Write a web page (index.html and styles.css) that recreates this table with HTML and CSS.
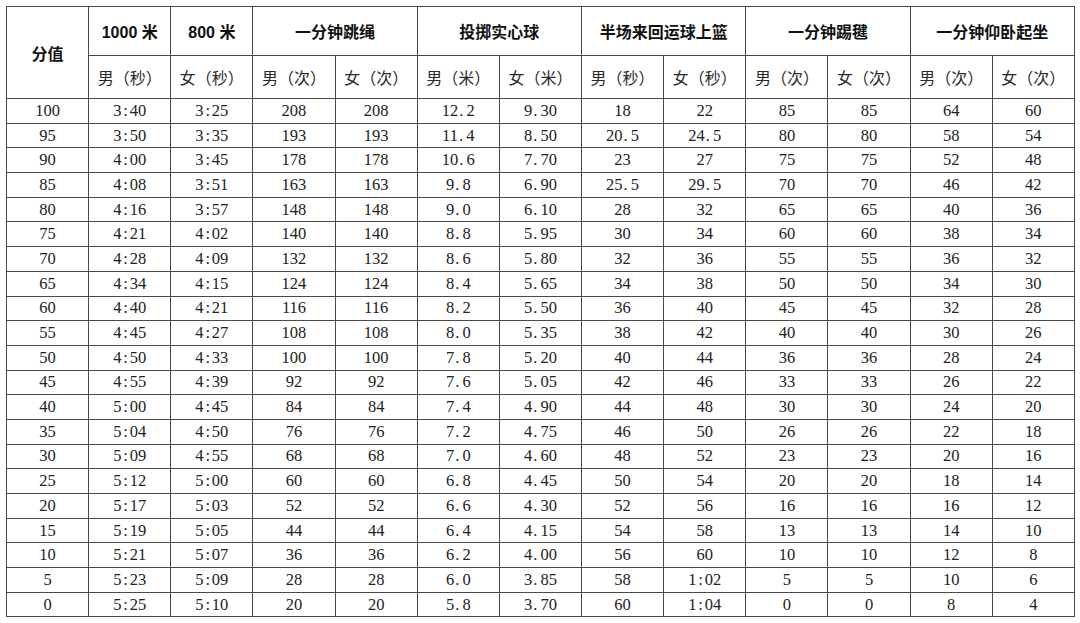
FILE: index.html
```html
<!DOCTYPE html>
<html lang="zh-CN">
<head>
<meta charset="utf-8">
<title>体育评分标准</title>
<link rel="stylesheet" href="styles.css">
</head>
<body>
<table class="score">
<colgroup>
<col><col><col><col><col><col><col><col><col><col><col><col><col>
</colgroup>
<thead>
<tr class="h1">
<th rowspan="2" class="lead">分值</th>
<th>1000 米</th>
<th>800 米</th>
<th colspan="2">一分钟跳绳</th>
<th colspan="2">投掷实心球</th>
<th colspan="2">半场来回运球上篮</th>
<th colspan="2">一分钟踢毽</th>
<th colspan="2">一分钟仰卧起坐</th>
</tr>
<tr class="h2">
<th>男（秒）</th><th>女（秒）</th>
<th>男（次）</th><th>女（次）</th>
<th>男（米）</th><th>女（米）</th>
<th>男（秒）</th><th>女（秒）</th>
<th>男（次）</th><th>女（次）</th>
<th>男（次）</th><th>女（次）</th>
</tr>
</thead>
<tbody>
<tr><td>100</td><td>3<i>:</i>40</td><td>3<i>:</i>25</td><td>208</td><td>208</td><td>12<b>.</b>2</td><td>9<b>.</b>30</td><td>18</td><td>22</td><td>85</td><td>85</td><td>64</td><td>60</td></tr>
<tr><td>95</td><td>3<i>:</i>50</td><td>3<i>:</i>35</td><td>193</td><td>193</td><td>11<b>.</b>4</td><td>8<b>.</b>50</td><td>20<b>.</b>5</td><td>24<b>.</b>5</td><td>80</td><td>80</td><td>58</td><td>54</td></tr>
<tr><td>90</td><td>4<i>:</i>00</td><td>3<i>:</i>45</td><td>178</td><td>178</td><td>10<b>.</b>6</td><td>7<b>.</b>70</td><td>23</td><td>27</td><td>75</td><td>75</td><td>52</td><td>48</td></tr>
<tr><td>85</td><td>4<i>:</i>08</td><td>3<i>:</i>51</td><td>163</td><td>163</td><td>9<b>.</b>8</td><td>6<b>.</b>90</td><td>25<b>.</b>5</td><td>29<b>.</b>5</td><td>70</td><td>70</td><td>46</td><td>42</td></tr>
<tr><td>80</td><td>4<i>:</i>16</td><td>3<i>:</i>57</td><td>148</td><td>148</td><td>9<b>.</b>0</td><td>6<b>.</b>10</td><td>28</td><td>32</td><td>65</td><td>65</td><td>40</td><td>36</td></tr>
<tr><td>75</td><td>4<i>:</i>21</td><td>4<i>:</i>02</td><td>140</td><td>140</td><td>8<b>.</b>8</td><td>5<b>.</b>95</td><td>30</td><td>34</td><td>60</td><td>60</td><td>38</td><td>34</td></tr>
<tr><td>70</td><td>4<i>:</i>28</td><td>4<i>:</i>09</td><td>132</td><td>132</td><td>8<b>.</b>6</td><td>5<b>.</b>80</td><td>32</td><td>36</td><td>55</td><td>55</td><td>36</td><td>32</td></tr>
<tr><td>65</td><td>4<i>:</i>34</td><td>4<i>:</i>15</td><td>124</td><td>124</td><td>8<b>.</b>4</td><td>5<b>.</b>65</td><td>34</td><td>38</td><td>50</td><td>50</td><td>34</td><td>30</td></tr>
<tr><td>60</td><td>4<i>:</i>40</td><td>4<i>:</i>21</td><td>116</td><td>116</td><td>8<b>.</b>2</td><td>5<b>.</b>50</td><td>36</td><td>40</td><td>45</td><td>45</td><td>32</td><td>28</td></tr>
<tr><td>55</td><td>4<i>:</i>45</td><td>4<i>:</i>27</td><td>108</td><td>108</td><td>8<b>.</b>0</td><td>5<b>.</b>35</td><td>38</td><td>42</td><td>40</td><td>40</td><td>30</td><td>26</td></tr>
<tr><td>50</td><td>4<i>:</i>50</td><td>4<i>:</i>33</td><td>100</td><td>100</td><td>7<b>.</b>8</td><td>5<b>.</b>20</td><td>40</td><td>44</td><td>36</td><td>36</td><td>28</td><td>24</td></tr>
<tr><td>45</td><td>4<i>:</i>55</td><td>4<i>:</i>39</td><td>92</td><td>92</td><td>7<b>.</b>6</td><td>5<b>.</b>05</td><td>42</td><td>46</td><td>33</td><td>33</td><td>26</td><td>22</td></tr>
<tr><td>40</td><td>5<i>:</i>00</td><td>4<i>:</i>45</td><td>84</td><td>84</td><td>7<b>.</b>4</td><td>4<b>.</b>90</td><td>44</td><td>48</td><td>30</td><td>30</td><td>24</td><td>20</td></tr>
<tr><td>35</td><td>5<i>:</i>04</td><td>4<i>:</i>50</td><td>76</td><td>76</td><td>7<b>.</b>2</td><td>4<b>.</b>75</td><td>46</td><td>50</td><td>26</td><td>26</td><td>22</td><td>18</td></tr>
<tr><td>30</td><td>5<i>:</i>09</td><td>4<i>:</i>55</td><td>68</td><td>68</td><td>7<b>.</b>0</td><td>4<b>.</b>60</td><td>48</td><td>52</td><td>23</td><td>23</td><td>20</td><td>16</td></tr>
<tr><td>25</td><td>5<i>:</i>12</td><td>5<i>:</i>00</td><td>60</td><td>60</td><td>6<b>.</b>8</td><td>4<b>.</b>45</td><td>50</td><td>54</td><td>20</td><td>20</td><td>18</td><td>14</td></tr>
<tr><td>20</td><td>5<i>:</i>17</td><td>5<i>:</i>03</td><td>52</td><td>52</td><td>6<b>.</b>6</td><td>4<b>.</b>30</td><td>52</td><td>56</td><td>16</td><td>16</td><td>16</td><td>12</td></tr>
<tr><td>15</td><td>5<i>:</i>19</td><td>5<i>:</i>05</td><td>44</td><td>44</td><td>6<b>.</b>4</td><td>4<b>.</b>15</td><td>54</td><td>58</td><td>13</td><td>13</td><td>14</td><td>10</td></tr>
<tr><td>10</td><td>5<i>:</i>21</td><td>5<i>:</i>07</td><td>36</td><td>36</td><td>6<b>.</b>2</td><td>4<b>.</b>00</td><td>56</td><td>60</td><td>10</td><td>10</td><td>12</td><td>8</td></tr>
<tr><td>5</td><td>5<i>:</i>23</td><td>5<i>:</i>09</td><td>28</td><td>28</td><td>6<b>.</b>0</td><td>3<b>.</b>85</td><td>58</td><td>1<i>:</i>02</td><td>5</td><td>5</td><td>10</td><td>6</td></tr>
<tr><td>0</td><td>5<i>:</i>25</td><td>5<i>:</i>10</td><td>20</td><td>20</td><td>5<b>.</b>8</td><td>3<b>.</b>70</td><td>60</td><td>1<i>:</i>04</td><td>0</td><td>0</td><td>8</td><td>4</td></tr>
</tbody>
</table>
</body>
</html>
```
FILE: styles.css
```css
html, body {
  margin: 0;
  padding: 0;
  background: #ffffff;
}

body {
  padding: 6px;
}

.score {
  border-collapse: collapse;
  table-layout: fixed;
  width: 1068px;
  color: #1a1a1a;
}

.score col {
  width: 82.15px;
}

.score th,
.score td {
  border: 1px solid #4a4a4a;
  padding: 0;
  text-align: center;
  vertical-align: middle;
  white-space: nowrap;
  overflow: hidden;
}

.score .h1 th {
  height: 48px;
  font-family: "Liberation Sans", "Noto Sans CJK SC", sans-serif;
  font-weight: bold;
  font-size: 16px;
  color: #111;
}

.score th.lead {
  font-family: "Noto Sans CJK SC", sans-serif;
  font-weight: bold;
  font-size: 16px;
}

.score .h2 th {
  height: 42px;
  font-family: "Noto Sans CJK SC", sans-serif;
  font-weight: normal;
  font-size: 16px;
  color: #2a2a2a;
}

.score td {
  height: 23.7px;
  font-family: "Liberation Serif", "Noto Sans CJK SC", serif;
  font-size: 16.5px;
  line-height: 20px;
  color: #222;
}

.score td i,
.score td b {
  display: inline-block;
  width: 0.5em;
  font-style: normal;
  font-weight: normal;
}

.score td i {
  text-align: center;
}

.score td b {
  text-align: left;
  padding-left: 0.06em;
  box-sizing: border-box;
}
```
